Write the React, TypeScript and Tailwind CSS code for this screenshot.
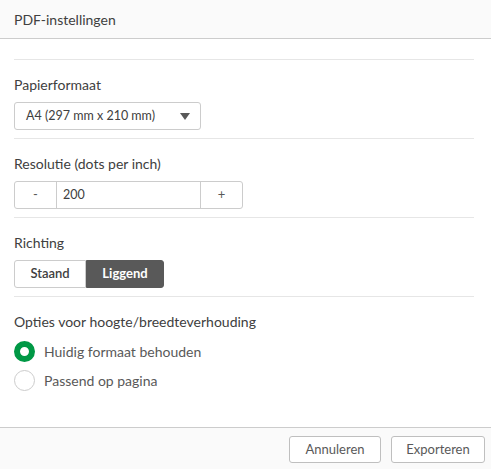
import React, { useState } from 'react';

const font = { fontFamily: 'Lato, "Open Sans", sans-serif' };

const Section = ({ label, children }: { label: string; children: React.ReactNode }) => (
  <div className="border-t border-[#e6e6e6] pt-4 pb-2">
    <div className="h-[18px] text-[14px] leading-[18px] text-[#404040]">{label}</div>
    <div className="mt-2">{children}</div>
  </div>
);

const Radio = ({ checked, label, onClick }: { checked: boolean; label: string; onClick: () => void }) => (
  <button onClick={onClick} className="flex h-[29px] items-center gap-[9px] text-left">
    {checked ? (
      <span className="box-border h-[21px] w-[21px] rounded-full border-[6px] border-[#009845] bg-white" />
    ) : (
      <span className="box-border h-[21px] w-[21px] rounded-full border border-[#cccccc] bg-white" />
    )}
    <span className="text-[14px] text-[#595959]">{label}</span>
  </button>
);

export default function App() {
  const [dpi, setDpi] = useState(200);
  const [landscape, setLandscape] = useState(true);
  const [keep, setKeep] = useState(true);

  return (
    <div className="flex h-[469px] w-[491px] flex-col bg-white" style={font}>
      <div className="flex h-[39px] items-center border-b border-[#cccccc] bg-[#fafafa] px-[14px]">
        <span className="text-[14px] text-[#404040]">PDF-instellingen</span>
      </div>

      <div className="flex-1 pl-[14px] pr-[17px] pt-[20px]">
        <Section label="Papierformaat">
          <div className="flex h-[28px] w-[187px] items-center justify-between rounded-[3px] border border-[#cccccc] pl-[11px] pr-[10px]">
            <span className="text-[12.5px] text-[#404040]">A4 (297 mm x 210 mm)</span>
            <svg width="10" height="7" viewBox="0 0 10 7">
              <path d="M0 0 H10 L5 7 Z" fill="#595959" />
            </svg>
          </div>
        </Section>

        <Section label="Resolutie (dots per inch)">
          <div className="flex h-[28px] w-[229px] rounded-[3px] border border-[#cccccc]">
            <button
              onClick={() => setDpi(dpi - 1)}
              className="w-[42px] border-r border-[#cccccc] text-[13px] text-[#595959]"
            >
              -
            </button>
            <input
              value={dpi}
              onChange={(e) => setDpi(Number(e.target.value) || 0)}
              className="w-[143px] px-[6px] text-[12.5px] text-[#404040] outline-none"
            />
            <button
              onClick={() => setDpi(dpi + 1)}
              className="flex-1 border-l border-[#cccccc] text-[13px] text-[#595959]"
            >
              +
            </button>
          </div>
        </Section>

        <Section label="Richting">
          <div className="flex h-[28px]">
            <button
              onClick={() => setLandscape(false)}
              className={`w-[72px] rounded-l-[3px] border text-[13px] font-semibold ${
                landscape ? 'border-[#cccccc] bg-white text-[#404040]' : 'border-[#595959] bg-[#595959] text-white'
              }`}
            >
              Staand
            </button>
            <button
              onClick={() => setLandscape(true)}
              className={`w-[78px] rounded-r-[3px] border text-[13px] font-bold ${
                landscape ? 'border-[#595959] bg-[#595959] text-white' : 'border-[#cccccc] bg-white text-[#404040]'
              }`}
            >
              Liggend
            </button>
          </div>
        </Section>

        <div className="border-t border-[#e6e6e6] pt-4">
          <div className="h-[18px] text-[14px] leading-[18px] text-[#404040]">
            Opties voor hoogte/breedteverhouding
          </div>
          <div className="mt-[6px] flex flex-col">
            <Radio checked={keep} label="Huidig formaat behouden" onClick={() => setKeep(true)} />
            <Radio checked={!keep} label="Passend op pagina" onClick={() => setKeep(false)} />
          </div>
        </div>
      </div>

      <div className="flex h-[42px] justify-end gap-[10px] border-t border-[#cccccc] bg-[#fafafa] pr-[6px] pt-2">
        <button className="h-[27px] w-[92px] rounded-[3px] border border-[#bfbfbf] bg-white text-[13px] text-[#595959]">
          Annuleren
        </button>
        <button className="h-[27px] w-[94px] rounded-[3px] border border-[#bfbfbf] bg-white text-[13px] text-[#595959]">
          Exporteren
        </button>
      </div>
    </div>
  );
}
